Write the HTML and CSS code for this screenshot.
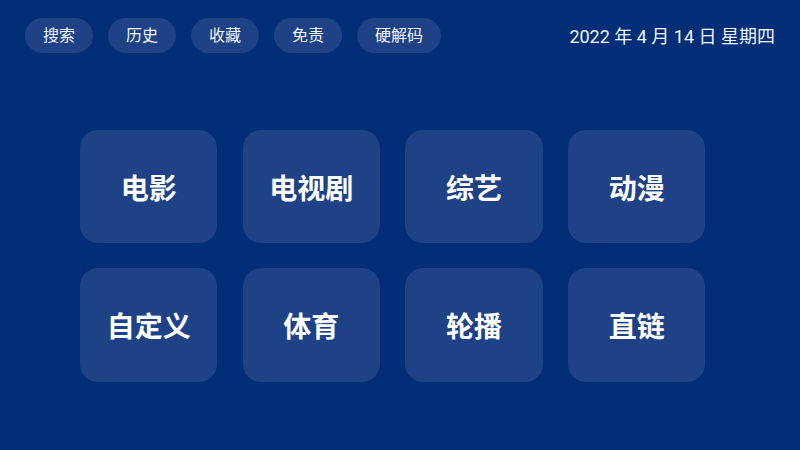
FILE: index.html
```html
<!DOCTYPE html>
<html lang="zh-CN">
<head>
<meta charset="utf-8">
<title>首页</title>
<link rel="stylesheet" href="styles.css">
</head>
<body>
<div class="page">
  <header class="topbar">
    <nav class="menu">
      <span class="pill">搜索</span>
      <span class="pill">历史</span>
      <span class="pill">收藏</span>
      <span class="pill">免责</span>
      <span class="pill">硬解码</span>
    </nav>
    <div class="date">2022 年 4 月 14 日 星期四</div>
  </header>
  <main class="grid">
    <div class="card">电影</div>
    <div class="card">电视剧</div>
    <div class="card">综艺</div>
    <div class="card">动漫</div>
    <div class="card">自定义</div>
    <div class="card">体育</div>
    <div class="card">轮播</div>
    <div class="card">直链</div>
  </main>
</div>
</body>
</html>
```
FILE: styles.css
```css
html, body {
  margin: 0;
  padding: 0;
  background: #012e76;
}
body {
  width: 800px;
  height: 450px;
  overflow: hidden;
  font-family: Roboto, "Noto Sans CJK SC", sans-serif;
  color: #ffffff;
}
.page {
  padding: 18px 25px 0 25px;
}
.topbar {
  display: flex;
  align-items: center;
  justify-content: space-between;
  height: 35px;
}
.menu {
  display: flex;
  gap: 15px;
}
.pill {
  display: flex;
  align-items: center;
  justify-content: center;
  height: 35px;
  padding: 0 18px;
  border-radius: 18px;
  background: #1e4285;
  font-size: 16px;
  line-height: 1;
  color: #f2f5fa;
}
.date {
  font-size: 18px;
  line-height: 1;
  color: #f2f5fa;
  margin-top: 3px;
}
.grid {
  display: grid;
  grid-template-columns: repeat(4, 137.3px);
  grid-auto-rows: 113.3px;
  column-gap: 25.4px;
  row-gap: 25px;
  margin: 77px 0 0 55px;
}
.card {
  display: flex;
  align-items: center;
  justify-content: center;
  background: #1e4285;
  border-radius: 18px;
  font-size: 28px;
  font-weight: 700;
  color: #ffffff;
}
```
